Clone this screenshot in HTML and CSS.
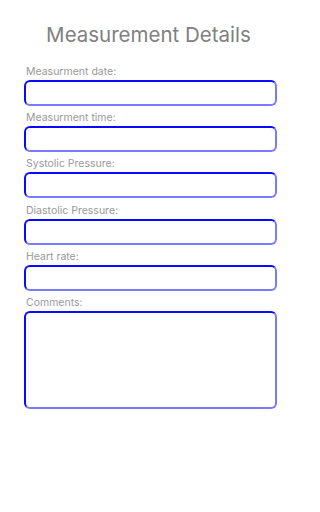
FILE: index.html
```html
<!DOCTYPE html>
<html>
<head>
<meta charset="utf-8">
<link rel="stylesheet" href="styles.css">
</head>
<body>
<main class="page">
  <h1 class="title">Measurement Details</h1>
  <form class="form">
    <div class="field">
      <label class="label">Measurment date:</label>
      <div class="box"></div>
    </div>
    <div class="field">
      <label class="label">Measurment time:</label>
      <div class="box"></div>
    </div>
    <div class="field">
      <label class="label">Systolic Pressure:</label>
      <div class="box"></div>
    </div>
    <div class="field">
      <label class="label">Diastolic Pressure:</label>
      <div class="box"></div>
    </div>
    <div class="field">
      <label class="label">Heart rate:</label>
      <div class="box"></div>
    </div>
    <div class="field">
      <label class="label">Comments:</label>
      <div class="box box-large"></div>
    </div>
  </form>
</main>
</body>
</html>
```
FILE: styles.css
```css
html, body {
  margin: 0;
  padding: 0;
  background: #ffffff;
}
body {
  font-family: Inter, "Liberation Sans", sans-serif;
}
.page {
  width: 307px;
  padding-top: 22px;
  box-sizing: border-box;
}
.title {
  margin: 0;
  padding-right: 10px;
  font-size: 20.5px;
  font-weight: 400;
  line-height: 25px;
  color: #808080;
  text-align: center;
}
.form {
  margin: 18px 0 0 24px;
  width: 253px;
  display: flex;
  flex-direction: column;
  gap: 5.2px;
}
.field {
  display: flex;
  flex-direction: column;
}
.label {
  font-size: 10.5px;
  line-height: 14px;
  color: #999999;
  margin: 0 0 1px 2px;
}
.box {
  box-sizing: border-box;
  height: 26px;
  border: 2px solid;
  border-color: #0a0aff #7a7aff #7a7aff #0a0aff;
  border-radius: 6px;
  background: #ffffff;
}
.box-large {
  height: 98px;
}
```
